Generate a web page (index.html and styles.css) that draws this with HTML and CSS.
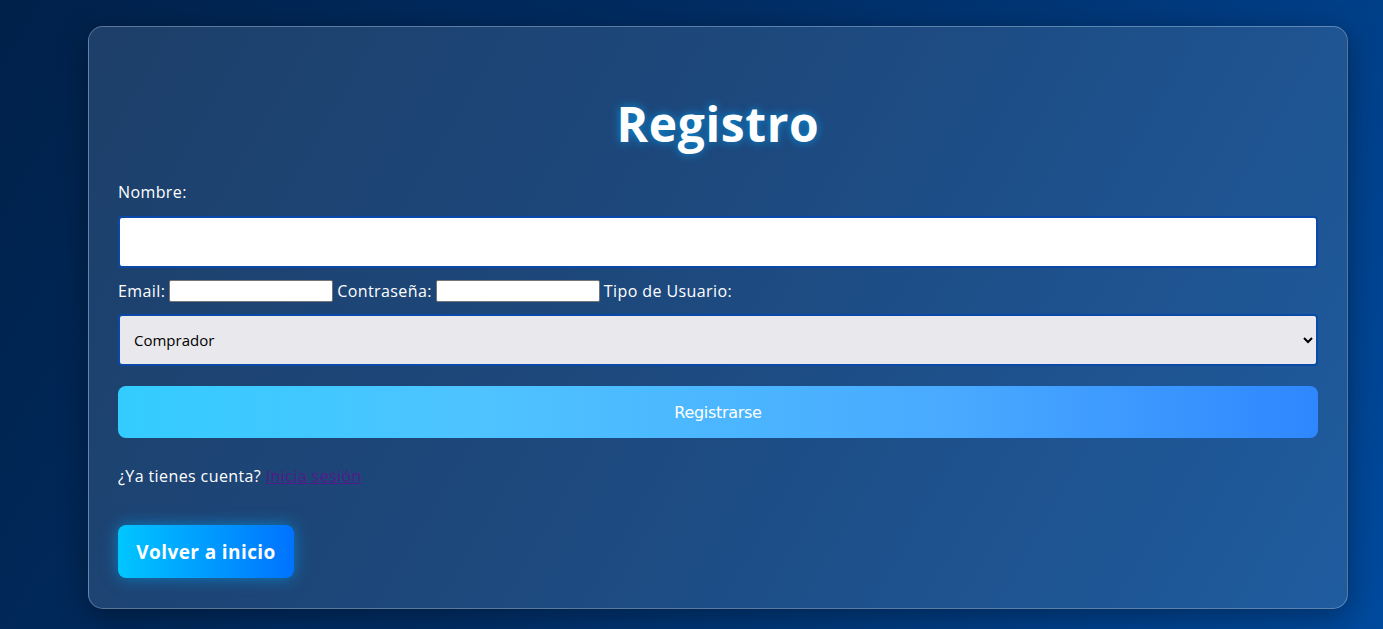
FILE: index.html
```html
<!DOCTYPE html>
<html lang="es">
<head>
<meta charset="utf-8">
<title>Registro</title>
<link rel="stylesheet" href="styles.css">
</head>
<body>
<div class="card">
  <h1 class="title">Registro</h1>
  <form class="form">
    <label class="lbl">Nombre:</label>
    <input class="field" type="text">
    <div class="inline-row">
      <span class="lbl">Email:</span> <input class="small" type="email"> <span class="lbl">Contraseña:</span> <input class="small" type="password"> <span class="lbl">Tipo de Usuario:</span>
    </div>
    <div class="select-wrap">
      <select class="field select">
        <option>Comprador</option>
        <option>Vendedor</option>
      </select>
    </div>
    <button type="button" class="submit">Registrarse</button>
  </form>
  <p class="login">¿Ya tienes cuenta? <a class="link" href="#">Inicia sesión</a></p>
  <a class="back" href="#">Volver a inicio</a>
</div>
</body>
</html>
```
FILE: styles.css
```css
html, body { height: 100%; }
body {
  margin: 0;
  background: linear-gradient(120deg, #00214a 0%, #002e66 45%, #004a9e 100%);
  font-family: "Open Sans", "DejaVu Sans", sans-serif;
  color: #fff;
  overflow: hidden;
}
.card {
  margin: 26px 35px 0 88px;
  padding: 29px 29px 30px;
  border: 1px solid rgba(255,255,255,0.28);
  border-radius: 15px;
  background: linear-gradient(120deg, #1d3f69 0%, #1d4a80 50%, #1f5c9f 100%);
  box-shadow: 0 8px 30px rgba(0,0,0,0.35);
  display: flex;
  flex-direction: column;
  align-items: flex-start;
}
.title {
  align-self: stretch;
  text-align: center;
  margin: 40px 0 30px;
  font-size: 48px;
  line-height: 56px;
  font-weight: 700;
  letter-spacing: 0.6px;
  text-shadow: 0 0 10px rgba(0,170,255,0.7);
}
.form {
  align-self: stretch;
  display: flex;
  flex-direction: column;
}
.lbl { font-size: 16px; line-height: 20px; letter-spacing: 0.4px; }
.form > .lbl { margin-bottom: 14px; }
.field {
  box-sizing: border-box;
  width: 100%;
  height: 52px;
  border: 2px solid #0a49a8;
  border-radius: 4px;
  background: #fff;
  padding: 0 14px;
  font-family: "Liberation Sans", Arial, sans-serif;
  font-size: 16px;
}
.inline-row {
  display: flex;
  align-items: center;
  gap: 4px;
  margin: 12px 0 12px;
  height: 22px;
}
.small {
  box-sizing: border-box;
  width: 164px;
  height: 22px;
  border: 1px solid #767676;
  border-radius: 2px;
  background: #fff;
  padding: 1px 2px;
}
.select-wrap { display: flex; }
.select {
  background: #e9e8ed;
  color: #000;
  font-family: "Open Sans", "Liberation Sans", sans-serif;
  font-size: 15px;
  padding-left: 10px;
}
.submit {
  margin-top: 20px;
  height: 52px;
  border: none;
  border-radius: 8px;
  background: linear-gradient(90deg, #33ccff 0%, #4ec3ff 30%, #49a9ff 70%, #2f87ff 100%);
  color: #fff;
  font-family: "DejaVu Sans", "Liberation Sans", sans-serif;
  font-size: 16px;
  letter-spacing: -0.3px;
}
.login {
  margin: 28px 0 0;
  font-size: 16px;
  line-height: 20px;
  letter-spacing: 0.4px;
}
.link { color: #551a8b; text-decoration: underline; }
.back {
  margin-top: 39px;
  display: flex;
  align-items: center;
  justify-content: center;
  width: 176px;
  height: 53px;
  border-radius: 8px;
  background: linear-gradient(90deg, #00c6ff 0%, #0072ff 100%);
  color: #fff;
  text-decoration: none;
  font-weight: 700;
  font-size: 19px;
  letter-spacing: 0.4px;
  box-shadow: 0 0 16px rgba(0,170,255,0.55);
}
```
